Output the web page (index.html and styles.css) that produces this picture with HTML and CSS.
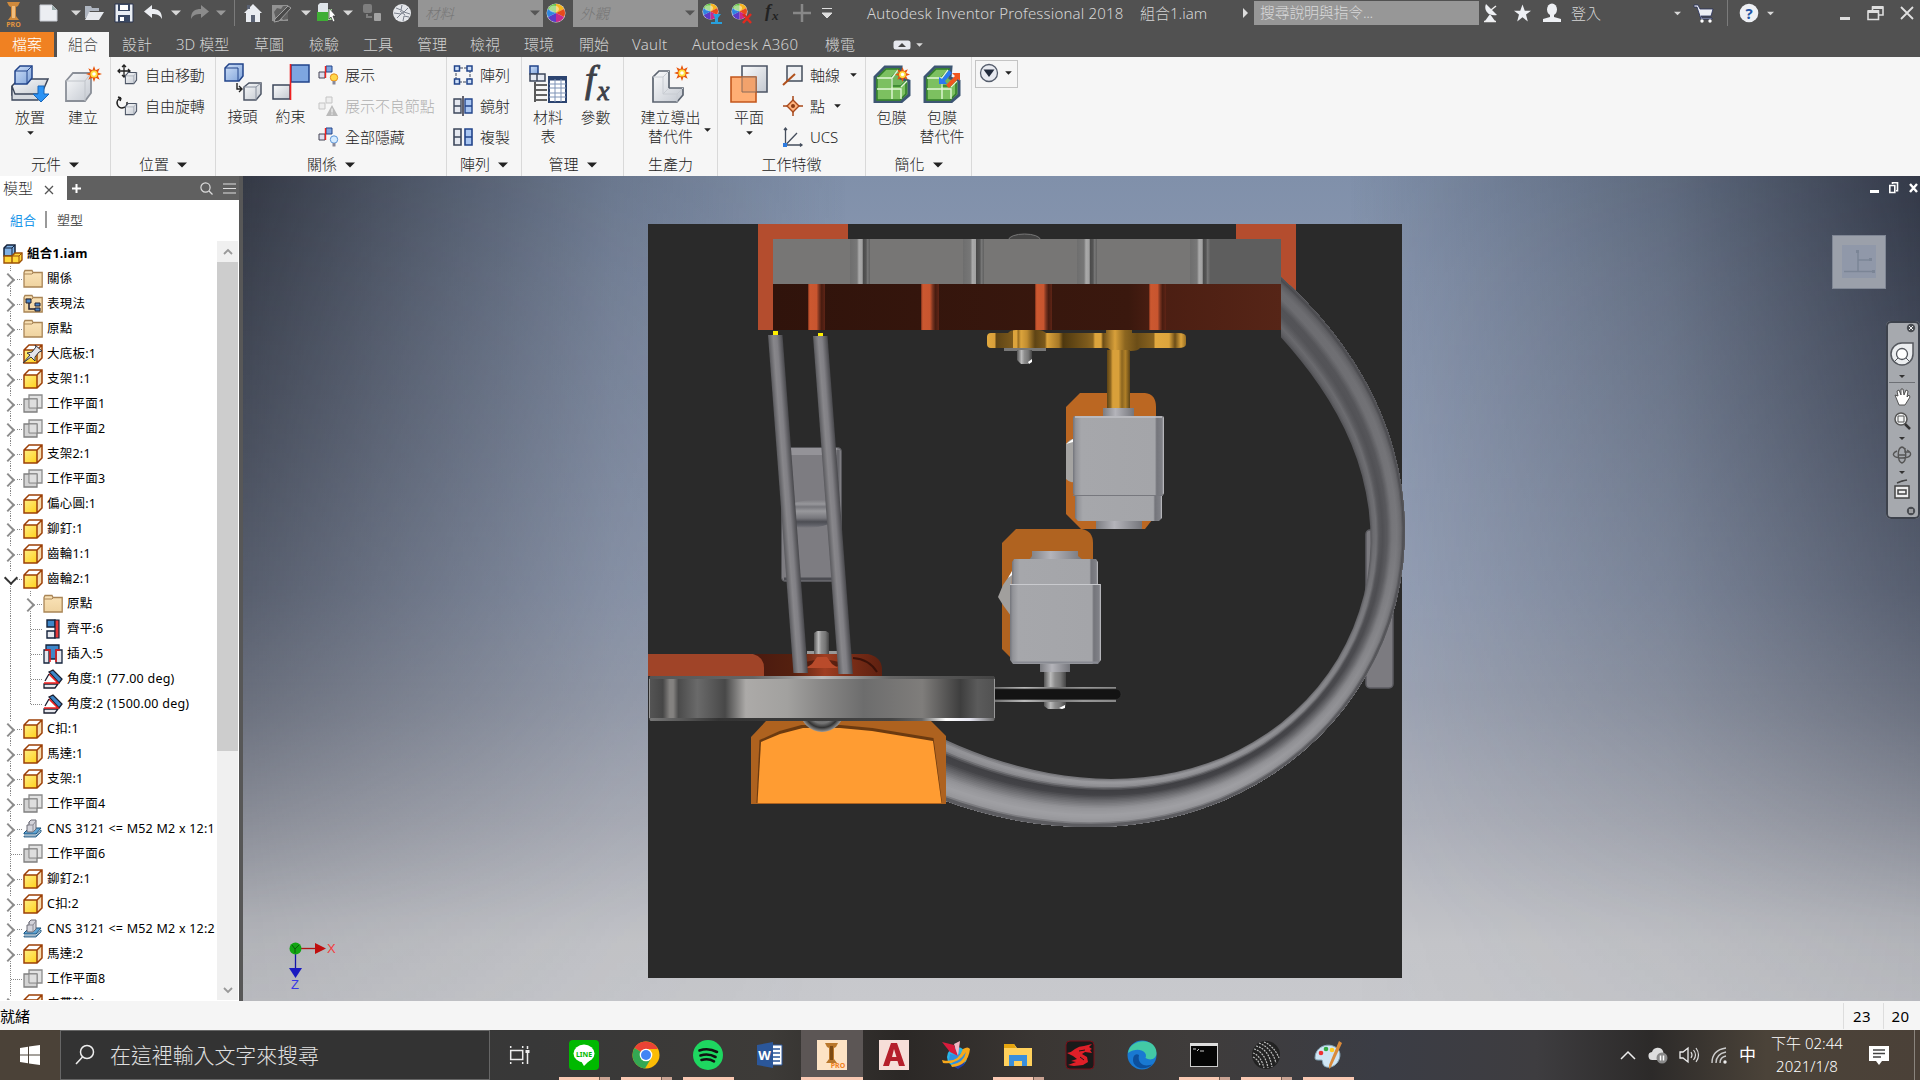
FILE: index.html
```html
<!DOCTYPE html>
<html lang="zh-Hant">
<head>
<meta charset="utf-8">
<title>Autodesk Inventor Professional 2018</title>
<link rel="stylesheet" href="styles.css">
</head>
<body>
<svg class="defs" width="0" height="0">
  <defs>
    <linearGradient id="gBlue" x1="0" y1="0" x2="1" y2="1"><stop offset="0" stop-color="#cfe0f8"/><stop offset="1" stop-color="#7fa3da"/></linearGradient>
    <linearGradient id="gGrey" x1="0" y1="0" x2="1" y2="1"><stop offset="0" stop-color="#fafbfc"/><stop offset="1" stop-color="#c3c8d0"/></linearGradient>
    <linearGradient id="gYel" x1="0" y1="0" x2="1" y2="1"><stop offset="0" stop-color="#ffee85"/><stop offset="1" stop-color="#ffd21c"/></linearGradient>
    <linearGradient id="gFold" x1="0" y1="0" x2="0" y2="1"><stop offset="0" stop-color="#fae3b8"/><stop offset="1" stop-color="#efd3a0"/></linearGradient>
  </defs>
  <symbol id="dn" viewBox="0 0 10 6"><path d="M0 .5h10L5 5.5z" fill="currentColor"/></symbol>
  <symbol id="box" viewBox="0 0 20 20"><path d="M1 6 6 1h13v13l-5 5H1z" fill="#fff3b0"/><path d="M1 6h13v13H1z" fill="url(#gYel)"/><path d="M1 6 6 1h13l-5 5z" fill="#fff"/><path d="M14 6l5-5v13l-5 5z" fill="#f6ddb0"/><path d="M1 6 6 1h13v13l-5 5H1zM1 6h13v13M14 6l5-5" fill="none" stroke="#9c3f06" stroke-width="1.5"/></symbol>
  <symbol id="plane" viewBox="0 0 20 20"><path d="M6 1h13v13H6z" fill="#e2e2e2" stroke="#8b8b8b" stroke-width="1.3"/><path d="M1 5h13v13H1z" fill="#cbcbcb" fill-opacity=".85" stroke="#7f7f7f" stroke-width="1.3"/><path d="M6 5h8v9H6z" fill="#dedede" stroke="#8b8b8b"/></symbol>
  <symbol id="fold" viewBox="0 0 20 20"><path d="M1 3.500 2 1.500h7l1 2h9.200V18H1z" fill="url(#gFold)" stroke="#a98556" stroke-width="1.300"/><path d="M1 5h8l1.500-1.500" fill="none" stroke="#a98556"/></symbol>
  <symbol id="bolt" viewBox="0 0 20 20"><path d="M1 14l5-5h12l-5 6H1z" fill="#5fa3d2" stroke="#16507c"/><path d="M1 17h12l5-6v2l-5 5H1z" fill="#d8e6f0" stroke="#16507c" stroke-width=".8"/><path d="M4 6h2V3l2-2h5v9l-3 3H4z" fill="#d3d3da" stroke="#6b6b75"/><path d="M6 3v3h4l3-4M10 6v7" stroke="#8b8b95" fill="none"/></symbol>
  <symbol id="angle" viewBox="0 0 20 20"><path d="M6 3l4-2 9 9-3 4z" fill="#3e86c8" stroke="#1b1f30" stroke-width="1.300"/><path d="M1 15h14l-3 4H1z" fill="#e6e8ee" stroke="#1b1f30" stroke-width="1.300"/><path d="M6 5l9 9H1z" fill="#fff"/><path d="M6 5l9 9H1" fill="none" stroke="#ef2020" stroke-width="1.500"/><path d="M6 5L2 12" fill="none" stroke="#1b1f30" stroke-width="1.300"/></symbol>
  <symbol id="cube" viewBox="0 0 20 20"><path d="M2 7l4-5h12v11l-4 5H2z" fill="url(#gGrey)" stroke="#4d5666" stroke-width="1.500"/><path d="M2 7h12v11M14 7l4-5" fill="none" stroke="#9aa2ae"/></symbol>
  <symbol id="spark" viewBox="0 0 16 16"><path d="M8 0l1.600 4.200L13.700 2.300 11.800 6.400 16 8l-4.200 1.600 1.900 4.100-4.100-1.900L8 16l-1.600-4.200-4.100 1.900 1.900-4.100L0 8l4.200-1.600L2.300 2.300l4.100 1.900z" fill="#e8560c"/><circle cx="8" cy="8" r="3.600" fill="#ffe040"/><circle cx="8" cy="8" r="1.800" fill="#fff"/></symbol>
  <symbol id="sphere" viewBox="0 0 20 20"><circle cx="10" cy="10" r="9.500" fill="#ddd"/><path d="M10 10V1a9 9 0 0 1 8 5z" fill="#f7b51e"/><path d="M10 10l8-4a9 9 0 0 1 0 8z" fill="#e84b1c"/><path d="M10 10l8 4a9 9 0 0 1-8 5z" fill="#c82a8c"/><path d="M10 10v9a9 9 0 0 1-8-5z" fill="#5b3cc8"/><path d="M10 10l-8 4a9 9 0 0 1 0-8z" fill="#2f86e0"/><path d="M10 10L2 6a9 9 0 0 1 8-5z" fill="#5fc23a"/><ellipse cx="8" cy="6" rx="5" ry="3.500" fill="#fff" opacity=".45"/></symbol>
  <symbol id="green" viewBox="0 0 38 38"><path d="M2 12 12 2h16l-1 11 9 3v14l-8 7H2z" fill="#70b55c" stroke="#3d5673" stroke-width="3"/><path d="M4 13 13 4h13l-7 8v9h9l5-5v13l-6 6H4z" fill="#7cc060" stroke="#2f7d27" stroke-width="1.500"/><path d="M4 13h15v21M4 24h24v10M28 22l6-6M19 13l6-8" fill="none" stroke="#e2f7d8" stroke-width="1.400"/></symbol>
</svg>

<header class="titlebar">
  <svg class="logo" width="15" height="26" viewBox="0 0 15 26"><path d="M1 0h13l-2 4-2 1v9l3 4H2l3-4V5L3 4z" fill="#d08a3c"/><path d="M6 4h3v12H6z" fill="#f0bd7d"/><text x="7.500" y="25" font-size="7" text-anchor="middle" fill="#e09440" font-weight="700">PRO</text></svg>
  <svg width="20" height="20" viewBox="0 0 20 20"><path d="M2 2h12l5 5v11H2z" fill="#eceef2" stroke="#c8ccd4"/><path d="M14 2v5h5z" fill="#9aa"/></svg>
  <svg class="car" width="10" height="6"><use href="#dn"/></svg>
  <svg width="20" height="20" viewBox="0 0 20 20"><path d="M1 3h6l1 2h7v3H6l-4 7H1z" fill="#aeb5c0"/><path d="M5 9h15l-5 8H1z" fill="#e6e9ee"/></svg>
  <svg width="20" height="20" viewBox="0 0 20 20"><path d="M1 1h18v18H1z" fill="#e9edf3" stroke="#2a3550"/><path d="M4 1h12v7H4zM4 12h12v7H4z" fill="#3a4863"/><path d="M6 2h8v5H6zM6 14h4v4H6z" fill="#fff"/></svg>
  <svg width="20" height="18" viewBox="0 0 20 18"><path d="M8 1v4c6 0 10 2 10 10-2-4-5-5-10-5v4L0 7.500z" fill="#eceef2"/></svg>
  <svg class="car" width="10" height="6"><use href="#dn"/></svg>
  <svg width="20" height="18" viewBox="0 0 20 18"><path d="M11 1v4C5 5 1 7 1 15c2-4 5-5 10-5v4l8-6.500z" fill="#8b8b8b"/></svg>
  <svg class="car dim" width="10" height="6"><use href="#dn"/></svg>
  <i class="tsep"></i>
  <svg width="20" height="20" viewBox="0 0 20 20"><path d="M10 1l9 9h-2v9H3v-9H1z" fill="#e9ecf1"/><path d="M8 12h4v7H8zM4 2h3v4H4z" fill="#5a6274"/></svg>
  <svg width="20" height="20" viewBox="0 0 20 20"><path d="M0 2h16v16H0z" fill="#929292"/><path d="M2 9l3-4 4 1 2-3h5v13l-5 1-2-3-5 2z" fill="#606060"/><path d="M3 16L16 3l3 2L7 18l-5 1z" fill="#4a4a4a" stroke="#a0a0a0"/></svg>
  <svg class="car" width="10" height="6"><use href="#dn"/></svg>
  <svg width="20" height="20" viewBox="0 0 20 20"><path d="M1 2l2-2h8v9H1z" fill="#e0e5ea"/><path d="M0 9h11v9H0z" fill="#3fae35"/><path d="M11 6h4v11h-4z" fill="#9fd795"/><path d="M12 5l7 8h-3l2 5-2 1-2-5-2 2z" fill="#fff" stroke="#333" stroke-width=".7"/></svg>
  <svg class="car" width="10" height="6"><use href="#dn"/></svg>
  <svg width="20" height="20" viewBox="0 0 20 20"><rect x="1" y="1" width="9" height="9" rx="2" fill="#7e7e7e"/><path d="M5 11v3h5" fill="none" stroke="#7e7e7e" stroke-width="2"/><rect x="12" y="10" width="7" height="8" rx="1" fill="#a2a2a2"/></svg>
  <svg width="20" height="20" viewBox="0 0 20 20"><circle cx="10" cy="10" r="9" fill="#e4e6ea"/><path d="M4 5l5 2 1-5M16 5l-4 4 6 2M5 15l4-4-7-1M11 18l1-5 5 1M8 8l5 4M9 7l3 2-3 2" stroke="#7a808c" fill="none" stroke-width="1"/></svg>
  <div class="combo"><em>材料</em><svg width="10" height="6"><use href="#dn"/></svg></div>
  <svg width="20" height="20"><use href="#sphere"/></svg>
  <div class="combo"><em>外觀</em><svg width="10" height="6"><use href="#dn"/></svg></div>
  <svg width="21" height="21" viewBox="0 0 21 21"><use href="#sphere" width="17" height="17"/><path d="M11 11h8l-3 4v4h4v2H9v-2h4v-4z" fill="#28a0dc"/></svg>
  <svg width="21" height="21" viewBox="0 0 21 21"><use href="#sphere" width="17" height="17"/><path d="M12 11l8 9M20 11l-8 9" stroke="#e02b20" stroke-width="2.500"/></svg>
  <svg width="20" height="22" viewBox="0 0 20 22"><text x="2" y="15" class="fxs">f<tspan dx="1" dy="3" font-size="13">x</tspan></text></svg>
  <svg width="20" height="20" viewBox="0 0 20 20"><path d="M10 1v18M1 10h18" stroke="#888" stroke-width="2.500"/></svg>
  <svg width="12" height="12" viewBox="0 0 12 12"><path d="M1 1.500h10M1 6h10l-5 5z" stroke="#ddd" fill="#ddd"/></svg>
  <span class="apptitle">Autodesk Inventor Professional 2018</span>
  <span class="fname">組合1.iam</span>
  <svg width="6" height="10" viewBox="0 0 6 10"><path d="M0 0l5 5-5 5z" fill="#ddd"/></svg>
  <div class="find">搜尋說明與指令...</div>
  <svg width="17" height="20" viewBox="0 0 17 20"><path d="M3 1c-3 6 3 13 11 11z" fill="#eef0f4"/><path d="M7 11l5 7H2z" fill="#eef0f4"/><path d="M8 7l5-4M1 18.500h12" stroke="#eee" stroke-width="1.500"/></svg>
  <svg width="19" height="20" viewBox="0 0 20 20"><path d="M10 1l2.400 6.500H19l-5.300 4.200L15.600 19 10 14.600 4.400 19l1.900-7.300L1 7.500h6.600z" fill="#eef0f4"/></svg>
  <svg width="20" height="20" viewBox="0 0 20 20"><ellipse cx="10" cy="6.500" rx="5" ry="6" fill="#eef0f4"/><path d="M8 11h4v3l7 2v3H1v-3l7-2z" fill="#eef0f4"/></svg>
  <span class="login">登入</span>
  <svg class="car tiny" width="10" height="5"><use href="#dn"/></svg>
  <svg width="21" height="20" viewBox="0 0 21 20"><path d="M0 2h4l2 4h13l-2 7H7l1 2h10v1H7L3 4H0z" fill="#eef0f4" stroke="#27305e" stroke-width=".8"/><circle cx="8" cy="18" r="1.700" fill="#fff"/><circle cx="16" cy="18" r="1.700" fill="#fff"/></svg>
  <i class="tsep"></i>
  <svg width="20" height="20" viewBox="0 0 20 20"><circle cx="10" cy="10" r="9.300" fill="#eef0f4"/><text x="10" y="15.500" font-size="15" font-weight="700" text-anchor="middle" fill="#2455a4">?</text></svg>
  <svg class="car tiny" width="10" height="5"><use href="#dn"/></svg>
  <svg class="low" width="14" height="4"><path d="M2 0h10v3H2z" fill="#ddd"/></svg>
  <svg width="17" height="15" viewBox="0 0 17 15"><path d="M5.500 4V1h10.500v8h-4M1 5h10.500v8.500H1z" fill="none" stroke="#ddd" stroke-width="1.600"/><path d="M1 4h11v3H1zM5 0h11v3H5z" fill="#ddd"/></svg>
  <svg width="16" height="14" viewBox="0 0 16 14"><path d="M2 1l12 12M14 1L2 13" stroke="#e0e0e0" stroke-width="1.800"/></svg>
</header>

<nav class="tabs">
  <span class="file">檔案</span><span class="active">組合</span><span>設計</span><span>3D 模型</span><span>草圖</span><span>檢驗</span><span>工具</span><span>管理</span><span>檢視</span><span>環境</span><span>開始</span><span class="vault">Vault</span><span class="a360">Autodesk A360</span><span>機電</span>
  <svg width="18" height="10" viewBox="0 0 18 10"><rect x=".5" y=".5" width="17" height="9" rx="2.500" fill="#e6e8ee"/><path d="M5 7l4-4 4 4z" fill="#444"/></svg>
  <svg class="car" width="7" height="4"><use href="#dn"/></svg>
</nav>

<section class="ribbon">
  <div class="panel p1">
    <div class="body">
      <div class="big b57"><svg width="38" height="38" viewBox="0 0 38 38"><path d="M1 21l7-7h29l-7 16H1z" fill="url(#gGrey)" stroke="#3d475b" stroke-width="1.500"/><path d="M1 35V21l3 8h28l-5 6z" fill="#d6dae0" stroke="#3d475b" stroke-width="1.300"/><path d="M4 6l5-5h12v12l-5 6H4z" fill="url(#gBlue)" stroke="#22448a" stroke-width="1.500"/><path d="M4 6h12v13M16 6l5-5" stroke="#22448a" fill="none"/><path d="M27 21h6v8h5l-8 8-8-8h5z" fill="#2c93f4" stroke="#1b66b8"/></svg><span>放置</span><svg class="ar" width="7" height="4"><use href="#dn"/></svg></div>
      <div class="big b53"><svg width="38" height="38" viewBox="0 0 38 38"><path d="M2 16l7-8h18v20l-6 8H2z" fill="url(#gGrey)" stroke="#8a8f98" stroke-width="1.800"/><path d="M2 16h19v20M21 16l6-8" stroke="#c0c4ca" fill="none"/><use href="#spark" x="22" y="1" width="16" height="16"/></svg><span>建立</span></div>
    </div>
    <div class="cap">元件<svg width="10" height="6"><use href="#dn"/></svg></div>
  </div>
  <div class="panel p2">
    <div class="body"><div class="col">
      <div class="sm"><svg width="20" height="20" viewBox="0 0 20 20"><path d="M6 0v12M0 6h12M4 2l2-2 2 2M4 10l2 2 2-2M2 4L0 6l2 2M10 4l2 2-2 2" stroke="#222" fill="none" stroke-width="1.300"/><use href="#cube" x="6" y="6" width="14" height="14"/></svg>自由移動</div>
      <div class="sm"><svg width="20" height="20" viewBox="0 0 20 20"><path d="M3 2a5 5 0 1 0 6 4M3 2L0 1M3 2L2 5" stroke="#222" fill="none" stroke-width="1.600"/><use href="#cube" x="6" y="6" width="14" height="14"/></svg>自由旋轉</div>
    </div></div>
    <div class="cap">位置<svg width="10" height="6"><use href="#dn"/></svg></div>
  </div>
  <div class="panel p3">
    <div class="body">
      <div class="big b53 up"><svg width="38" height="38" viewBox="0 0 38 38"><path d="M1 5l4-4h14v12l-4 5H1z" fill="url(#gBlue)" stroke="#22448a" stroke-width="1.500"/><path d="M1 5h13v13" stroke="#22448a" fill="none"/><path d="M13 20v6h4M15 23l3 3-3 3" stroke="#222" fill="none" stroke-width="1.400"/><path d="M20 24l5-4h12v11l-5 6H20z" fill="url(#gGrey)" stroke="#4d5666" stroke-width="1.500"/><path d="M20 24h12v13M32 24l5-4" stroke="#8a92a0" fill="none"/></svg><span>接頭</span></div>
      <div class="big b45 up"><svg width="38" height="38" viewBox="0 0 38 38"><path d="M19 2h18v17H19z" fill="#7ea6e0" stroke="#22448a" stroke-width="1.500"/><path d="M1 22h17v14H1z" fill="url(#gGrey)" stroke="#3d475b" stroke-width="1.500"/><path d="M18.500 1v36" stroke="#f02020" stroke-width="1.600"/></svg><span>約束</span></div>
      <div class="col c3">
        <div class="sm"><svg width="20" height="20" viewBox="0 0 20 20"><path d="M8 1h6v6H8z" fill="#7ea6e0" stroke="#22448a"/><path d="M1 7h6v6H1z" fill="#dde" stroke="#445"/><path d="M7.500 1v12" stroke="#f02020" stroke-width="1.400"/><circle cx="16" cy="12.500" r="3.700" fill="#ffd84a" stroke="#e98e1b"/><path d="M14.500 16h3v3.500h-3z" fill="#889"/></svg>展示</div>
        <div class="sm off"><svg width="20" height="20" viewBox="0 0 20 20"><path d="M8 1h6v6H8zM1 7h6v6H1z" fill="#eee" stroke="#c4c4c4"/><path d="M14 9l6 11H8z" fill="#bbb"/><path d="M14 12.500v4M14 17.500v1.200" stroke="#fff"/></svg>展示不良節點</div>
        <div class="sm"><svg width="20" height="20" viewBox="0 0 20 20"><path d="M8 1h6v6H8z" fill="#7ea6e0" stroke="#22448a"/><path d="M1 7h6v6H1z" fill="#dde" stroke="#445"/><path d="M7.500 1v12" stroke="#f02020" stroke-width="1.400"/><circle cx="16" cy="12.500" r="3.700" fill="#d6ecff" stroke="#5a94d8"/><path d="M14.500 16h3v3.500h-3z" fill="#889"/></svg>全部隱藏</div>
      </div>
    </div>
    <div class="cap">關係<svg width="10" height="6"><use href="#dn"/></svg></div>
  </div>
  <div class="panel p4">
    <div class="body"><div class="col c4">
      <div class="sm"><svg width="20" height="20" viewBox="0 0 20 20"><path d="M3 3h14v14H3z" fill="none" stroke="#3d475b" stroke-dasharray="3 1"/><path d="M1.500 1h5v5h-5zM14 1h5v5h-5zM14 14h5v5h-5zM1.500 14h5v5h-5z" fill="#cfe0f8" stroke="#22448a" stroke-width="1.500"/></svg>陣列</div>
      <div class="sm"><svg width="20" height="20" viewBox="0 0 20 20"><path d="M1 3h7v14H1zM1 10h7" fill="#e6e9f0" stroke="#3d475b" stroke-width="1.400"/><path d="M12 3h7v14h-7zM12 10h7" fill="#a9c6f2" stroke="#22448a" stroke-width="1.400"/><path d="M10 0v20" stroke="#223" stroke-width="1.400"/></svg>鏡射</div>
      <div class="sm"><svg width="20" height="20" viewBox="0 0 20 20"><path d="M1 2h7v16H1zM1 10h7" fill="#e6e9f0" stroke="#3d475b" stroke-width="1.600"/><path d="M12 2h7v16h-7zM12 10h7" fill="#a9c6f2" stroke="#22448a" stroke-width="1.600"/></svg>複製</div>
    </div></div>
    <div class="cap">陣列<svg width="10" height="6"><use href="#dn"/></svg></div>
  </div>
  <div class="panel p5">
    <div class="body">
      <div class="big b53"><svg width="38" height="38" viewBox="0 0 38 38"><path d="M1 1h8v8H1z" fill="url(#gBlue)" stroke="#22448a" stroke-width="1.500"/><path d="M1 9h7v7H1zM8 9h8v7H8z" fill="#e6eaf2" stroke="#3d475b" stroke-width="1.500"/><path d="M6 17v20M7 20h11M7 25h11M7 30h11M7 35h11" stroke="#333" stroke-width="1.600"/><path d="M20 12h17v25H20z" fill="#fff" stroke="#2c4470" stroke-width="2"/><path d="M20 14h17" stroke="#2c4470" stroke-width="3"/><path d="M20 19h17M20 23h17M20 28h17M20 32h17M26 14v23M32 14v23" stroke="#7f93b6" stroke-width="1"/></svg><span>材料<br>表</span></div>
      <div class="big b44"><svg width="38" height="38" viewBox="0 0 38 38"><text x="8" y="27" class="fx">f<tspan dx="2" dy="8" font-size="27">x</tspan></text></svg><span>參數</span></div>
    </div>
    <div class="cap">管理<svg width="10" height="6"><use href="#dn"/></svg></div>
  </div>
  <div class="panel p6">
    <div class="body">
      <div class="big b93"><svg width="38" height="38" viewBox="0 0 38 38"><path d="M1 12l6-6h10v17h14v7l-6 7H1z" fill="url(#gGrey)" stroke="#5c6470" stroke-width="1.700"/><path d="M1 12h10v17h14v8M11 12l6-6M11 29l6-6M25 29l6-6" stroke="#c8ccd2" fill="none"/><use href="#spark" x="22" y="0" width="16" height="16"/></svg><span>建立導出<br>替代件</span><svg class="ar side" width="7" height="4"><use href="#dn"/></svg></div>
    </div>
    <div class="cap">生產力</div>
  </div>
  <div class="panel p7">
    <div class="body">
      <div class="big b63"><svg width="38" height="38" viewBox="0 0 38 38"><path d="M12 1h25v26H12z" fill="url(#gGrey)" stroke="#4d5666" stroke-width="1.600"/><path d="M1 12h25v25H1z" fill="#ffae74" stroke="#c4571c" stroke-width="1.600"/><path d="M12 12h14v15H12z" fill="#f2a26c" stroke="#8a6a58"/></svg><span>平面</span><svg class="ar" width="7" height="4"><use href="#dn"/></svg></div>
      <div class="col c7">
        <div class="sm"><svg width="20" height="20" viewBox="0 0 20 20"><path d="M4 1h15v15H4z" fill="#eef0f3" stroke="#444d5c" stroke-width="1.500"/><path d="M0 20L12 9" stroke="#b0501c" stroke-width="2"/></svg>軸線<svg class="a2" width="7" height="4"><use href="#dn"/></svg></div>
        <div class="sm"><svg width="20" height="20" viewBox="0 0 20 20"><path d="M10 4l6 6-6 6-6-6z" fill="#ffb27c" stroke="#a8481a" stroke-width="1.400"/><path d="M10 0v4M10 16v4M0 10h4M16 10h4" stroke="#a8481a" stroke-width="1.500"/><circle cx="10" cy="10" r="2" fill="#8c3c14"/></svg>點<svg class="a3" width="7" height="4"><use href="#dn"/></svg></div>
        <div class="sm"><svg width="20" height="20" viewBox="0 0 20 20"><path d="M2.500 1v17H19M2.500 18L14 6M1 3l1.500-2L4 3M17 16.500l2 1.500-2 1.500" stroke="#444d5c" fill="none" stroke-width="1.300"/><rect x="0" y="16" width="4" height="4" fill="#2c7be0"/></svg>UCS</div>
      </div>
    </div>
    <div class="cap">工作特徵</div>
  </div>
  <div class="panel p8">
    <div class="body">
      <div class="big b52"><svg width="38" height="38" viewBox="0 0 38 38"><use href="#green"/><use href="#spark" x="22" y="2" width="15" height="15"/></svg><span>包膜</span></div>
      <div class="big b50"><svg width="38" height="38" viewBox="0 0 38 38"><use href="#green"/><path d="M16 19v-7l3 2 7-9 3 3-7 8 2 3z" fill="#2a78f0"/><path d="M23 20l9-9-3-3h8v8l-2-2-9 9z" fill="#f2561e"/></svg><span>包膜<br>替代件</span></div>
    </div>
    <div class="cap">簡化<svg width="10" height="6"><use href="#dn"/></svg></div>
  </div>
  <div class="pick"><svg width="20" height="20" viewBox="0 0 20 20"><circle cx="10" cy="10" r="8.500" fill="#e8eaf0" stroke="#555d6c" stroke-width="1.300"/><path d="M4.500 6.500h11L10 14z" fill="#222b3c"/></svg><svg width="7" height="4"><use href="#dn"/></svg></div>
</section>

<main class="main">
  <aside class="browser">
    <div class="bhead"><div class="btab">模型<svg width="10" height="10" viewBox="0 0 10 10"><path d="M1 1l8 8M9 1L1 9" stroke="#555" stroke-width="1.300"/></svg></div>
      <svg class="plus" width="9" height="9" viewBox="0 0 9 9"><path d="M4.500 0v9M0 4.500h9" stroke="#fff" stroke-width="2"/></svg>
      <svg class="mag" width="13" height="13" viewBox="0 0 13 13"><circle cx="5.500" cy="5.500" r="4.600" fill="none" stroke="#ddd" stroke-width="1.200"/><path d="M9 9l3.500 3.500" stroke="#ddd" stroke-width="1.300"/></svg>
      <svg width="13" height="11" viewBox="0 0 13 11"><path d="M0 1h13M0 5.500h13M0 10h13" stroke="#ddd" stroke-width="1.200"/></svg></div>
    <div class="bsub"><span class="on">組合</span><i></i><span>塑型</span></div>
    <div class="bbody">
      <ul class="tree">
        <li class="root"><svg width="20" height="20" viewBox="0 0 20 20"><path d="M1 4l3-3h8v8l-2 3H1z" fill="#7fb0e4" stroke="#14233c" stroke-width="1.500"/><path d="M1 4h8v7M9 4l3-3" fill="none" stroke="#14233c"/><path d="M1 12h8v7H1zM9 12l3-3h7v7l-3 3H9z" fill="#ffd83a" stroke="#9c5006" stroke-width="1.400"/><path d="M9 12h7v7M16 12l3-3" fill="none" stroke="#9c5006"/></svg><b>組合1.iam</b></li>
        <li class="x"><svg><use href="#fold"/></svg>關係</li>
        <li class="x"><svg viewBox="0 0 20 20"><use href="#fold"/><path d="M3 5h5v4H3zM12 9h5v3h-5zM12 14h5v3h-5z" fill="#4a86c8" stroke="#223"/><path d="M6 9v6h6" fill="none" stroke="#223" stroke-width="1.500"/></svg>表現法</li>
        <li class="x"><svg><use href="#fold"/></svg>原點</li>
        <li class="x"><svg viewBox="0 0 20 20"><use href="#box"/><path d="M0 19l7-8-3-2 5-1 4-5-1-2 7 6-3 1-4 5v4l-4-4z" fill="#e4e4ea" stroke="#33333c"/></svg>大底板:1</li>
        <li class="x"><svg><use href="#box"/></svg>支架1:1</li>
        <li class="x"><svg><use href="#plane"/></svg>工作平面1</li>
        <li class="x"><svg><use href="#plane"/></svg>工作平面2</li>
        <li class="x"><svg><use href="#box"/></svg>支架2:1</li>
        <li class="x"><svg><use href="#plane"/></svg>工作平面3</li>
        <li class="x"><svg><use href="#box"/></svg>偏心圓:1</li>
        <li class="x"><svg><use href="#box"/></svg>鉚釘:1</li>
        <li class="x"><svg><use href="#box"/></svg>齒輪1:1</li>
        <li class="x open"><svg><use href="#box"/></svg>齒輪2:1</li>
        <li class="kid x"><svg><use href="#fold"/></svg>原點</li>
        <li class="kid"><svg viewBox="0 0 20 20"><path d="M4 1h8v7H4z" fill="#3e86c8" stroke="#14233c" stroke-width="1.400"/><path d="M4 12h8v7H4z" fill="#e6e8ee" stroke="#14233c" stroke-width="1.400"/><path d="M12 1h4v18h-4z" fill="#e8393a" stroke="#14233c" stroke-width="1.200"/></svg>齊平:6</li>
        <li class="kid"><svg viewBox="0 0 20 20"><path d="M1 6h5v13H1zM13 6h6v13h-6z" fill="#e6e8ee" stroke="#14233c" stroke-width="1.300"/><path d="M3 1h13v5h-3v9H7V6H3z" fill="#3e86c8" stroke="#14233c" stroke-width="1.300"/><path d="M2 6h5v12M17 6h-4v12" fill="none" stroke="#ef2020" stroke-width="1.500"/></svg>插入:5</li>
        <li class="kid"><svg><use href="#angle"/></svg>角度:1 (77.00 deg)</li>
        <li class="kid last"><svg><use href="#angle"/></svg>角度:2 (1500.00 deg)</li>
        <li class="x"><svg><use href="#box"/></svg>C扣:1</li>
        <li class="x"><svg><use href="#box"/></svg>馬達:1</li>
        <li class="x"><svg><use href="#box"/></svg>支架:1</li>
        <li class="x"><svg><use href="#plane"/></svg>工作平面4</li>
        <li class="x"><svg><use href="#bolt"/></svg>CNS 3121 &lt;= M52 M2 x 12:1</li>
        <li><svg><use href="#plane"/></svg>工作平面6</li>
        <li class="x"><svg><use href="#box"/></svg>鉚釘2:1</li>
        <li class="x"><svg><use href="#box"/></svg>C扣:2</li>
        <li class="x"><svg><use href="#bolt"/></svg>CNS 3121 &lt;= M52 M2 x 12:2</li>
        <li class="x"><svg><use href="#box"/></svg>馬達:2</li>
        <li><svg><use href="#plane"/></svg>工作平面8</li>
        <li class="x"><svg><use href="#box"/></svg>皮帶輪:1</li>
      </ul>
      <div class="scroll"><svg width="10" height="6" viewBox="0 0 10 6"><path d="M1 5l4-4 4 4" fill="none" stroke="#999" stroke-width="1.800"/></svg><i></i><svg width="10" height="6" viewBox="0 0 10 6"><path d="M1 1l4 4 4-4" fill="none" stroke="#999" stroke-width="1.800"/></svg></div>
    </div>
  </aside>
  <section class="view">
    <svg class="scene" width="1677" height="825" viewBox="243 176 1677 825">
      <defs>
        <linearGradient id="ridge"><stop offset="0" stop-color="#6e6e6e"/><stop offset=".35" stop-color="#777"/><stop offset=".45" stop-color="#aaa"/><stop offset=".62" stop-color="#a0a0a0"/><stop offset=".64" stop-color="#4a4a4a"/><stop offset=".8" stop-color="#555"/><stop offset=".88" stop-color="#777"/><stop offset="1" stop-color="#606060"/></linearGradient>
        <linearGradient id="post"><stop offset="0" stop-color="#7a2f1a"/><stop offset=".1" stop-color="#cc5830"/><stop offset=".5" stop-color="#c8552f"/><stop offset=".65" stop-color="#7a3420"/><stop offset=".8" stop-color="#481c10"/><stop offset="1" stop-color="#5e2416"/></linearGradient>
        <linearGradient id="redbar"><stop offset="0" stop-color="#30130b"/><stop offset=".7" stop-color="#3a180e"/><stop offset=".75" stop-color="#4b1e12"/><stop offset="1" stop-color="#562517"/></linearGradient>
        <linearGradient id="disc"><stop offset="0" stop-color="#555"/><stop offset=".04" stop-color="#464646"/><stop offset=".06" stop-color="#848280"/><stop offset=".07" stop-color="#848280"/><stop offset=".085" stop-color="#4b4b4b"/><stop offset=".14" stop-color="#6a6a6a"/><stop offset=".22" stop-color="#484848"/><stop offset=".28" stop-color="#acaaa8"/><stop offset=".4" stop-color="#a2a19f"/><stop offset=".5" stop-color="#888786"/><stop offset=".62" stop-color="#6d6d6d"/><stop offset=".79" stop-color="#7f7d7b"/><stop offset=".9" stop-color="#3e3e3e"/><stop offset=".95" stop-color="#5b5b5b"/><stop offset="1" stop-color="#515151"/></linearGradient>
        <linearGradient id="rim"><stop offset="0" stop-color="#555"/><stop offset=".3" stop-color="#666"/><stop offset=".5" stop-color="#bbb"/><stop offset=".7" stop-color="#666"/><stop offset="1" stop-color="#444"/></linearGradient>
        <linearGradient id="rim2"><stop offset="0" stop-color="#777"/><stop offset=".2" stop-color="#333"/><stop offset=".7" stop-color="#444"/><stop offset=".79" stop-color="#666"/><stop offset=".86" stop-color="#fff"/><stop offset=".93" stop-color="#e6e6f2"/><stop offset="1" stop-color="#666"/></linearGradient>
        <linearGradient id="gold"><stop offset="0" stop-color="#5e4415"/><stop offset=".15" stop-color="#8c6620"/><stop offset=".25" stop-color="#d8a03a"/><stop offset=".5" stop-color="#d8a03a"/><stop offset=".65" stop-color="#8c6620"/><stop offset=".8" stop-color="#b08028"/><stop offset="1" stop-color="#5e4415"/></linearGradient>
        <linearGradient id="gear" gradientUnits="userSpaceOnUse" x1="987" y1="0" x2="1187" y2="0"><stop offset="0" stop-color="#e2a93f"/><stop offset=".04" stop-color="#d89f3a"/><stop offset=".045" stop-color="#5e4415"/><stop offset=".13" stop-color="#7c5a1c"/><stop offset=".132" stop-color="#dca43c"/><stop offset=".15" stop-color="#dca43c"/><stop offset=".155" stop-color="#93691f"/><stop offset=".17" stop-color="#dca43c"/><stop offset=".2" stop-color="#c08c30"/><stop offset=".24" stop-color="#5e4415"/><stop offset=".29" stop-color="#7c5a1c"/><stop offset=".3" stop-color="#dca43c"/><stop offset=".36" stop-color="#a57726"/><stop offset=".38" stop-color="#4e380f"/><stop offset=".5" stop-color="#7c5a1c"/><stop offset=".53" stop-color="#8c6620"/><stop offset=".54" stop-color="#dca43c"/><stop offset=".57" stop-color="#dca43c"/><stop offset=".58" stop-color="#6b4d17"/><stop offset=".64" stop-color="#d8a03a"/><stop offset=".69" stop-color="#8c6620"/><stop offset=".75" stop-color="#6b4d17"/><stop offset=".835" stop-color="#8a6420"/><stop offset=".84" stop-color="#e2a93f"/><stop offset=".91" stop-color="#dca43c"/><stop offset=".94" stop-color="#6b4d17"/><stop offset=".97" stop-color="#dca43c"/><stop offset="1" stop-color="#8c6620"/></linearGradient>
        <linearGradient id="motor"><stop offset="0" stop-color="#73757c"/><stop offset=".03" stop-color="#929398"/><stop offset=".09" stop-color="#a6a7ab"/><stop offset=".9" stop-color="#a4a5a9"/><stop offset=".92" stop-color="#74757b"/><stop offset=".98" stop-color="#808187"/><stop offset="1" stop-color="#c8c8cc"/></linearGradient>
        <linearGradient id="steel"><stop offset="0" stop-color="#555"/><stop offset=".3" stop-color="#bbb"/><stop offset=".5" stop-color="#8d8d8d"/><stop offset=".75" stop-color="#777"/><stop offset="1" stop-color="#444"/></linearGradient>
        <linearGradient id="collar"><stop offset="0" stop-color="#7c7d82"/><stop offset=".4" stop-color="#b4b4ba"/><stop offset="1" stop-color="#75767c"/></linearGradient>
        <linearGradient id="rod"><stop offset="0" stop-color="#5a5a5e"/><stop offset=".35" stop-color="#88878b"/><stop offset=".6" stop-color="#818085"/><stop offset="1" stop-color="#48484c"/></linearGradient>
        <linearGradient id="hub"><stop offset="0" stop-color="#4b1a0f"/><stop offset=".3" stop-color="#54200f"/><stop offset=".55" stop-color="#a03e22"/><stop offset=".75" stop-color="#7a2d17"/><stop offset="1" stop-color="#5e2010"/></linearGradient>
        <linearGradient id="shelf" x1="0" y1="0" x2="0" y2="1"><stop offset="0" stop-color="#7d7c81"/><stop offset=".15" stop-color="#97979b"/><stop offset=".25" stop-color="#77777c"/><stop offset=".4" stop-color="#98989c"/><stop offset=".65" stop-color="#77777c"/><stop offset=".78" stop-color="#4c4d53"/><stop offset=".9" stop-color="#606168"/><stop offset="1" stop-color="#7d7c81"/></linearGradient>
        <radialGradient id="ball"><stop offset="0" stop-color="#444"/><stop offset=".6" stop-color="#777"/><stop offset=".8" stop-color="#333"/><stop offset="1" stop-color="#999"/></radialGradient>
        <linearGradient id="belt"><stop offset="0" stop-color="#555"/><stop offset=".3" stop-color="#bbb"/><stop offset=".55" stop-color="#777"/><stop offset=".75" stop-color="#999"/><stop offset="1" stop-color="#888"/></linearGradient>
        <clipPath id="nc"><rect x="795" y="721" width="50" height="14"/></clipPath>
        <clipPath id="tc"><path d="M1281 224h130v616H946V400h335z"/></clipPath>
      </defs>
      <rect x="648" y="224" width="754" height="754" fill="#2a2a2a"/>
      <path d="M758 224h90v15h-75v91h-15zM1236 224h60v90h-15v-75h-45z" fill="#b44d2e"/>
      <rect x="1366" y="530" width="27" height="158" rx="4" fill="#7c7b80" stroke="#5c5c61" stroke-width="1.500"/>
      <g id="tube" clip-path="url(#tc)"></g>
      <ellipse cx="1024.500" cy="240" rx="16" ry="6" fill="#444" stroke="#777"/>
      <rect x="773" y="239" width="508" height="45" fill="#777675"/>
      <rect x="1205" y="239" width="76" height="45" fill="#5e5e5e"/>
      <g fill="url(#ridge)"><rect x="850" y="239" width="20" height="45"/><rect x="963" y="239" width="21" height="45"/><rect x="1077" y="239" width="20" height="45"/><rect x="1190" y="239" width="20" height="45"/></g>
      <rect x="773" y="284" width="508" height="46" fill="url(#redbar)"/>
      <g fill="url(#post)"><rect x="808" y="284" width="17" height="46"/><rect x="921" y="284" width="18" height="46"/><rect x="1035" y="284" width="17" height="46"/><rect x="1149" y="284" width="17" height="46"/></g>
      <rect x="781.500" y="447.500" width="60" height="134" rx="4" fill="#7d7c81" stroke="#56565a"/>
      <path d="M785 448h52v7h-52z" fill="#949398"/><path d="M838 450v126" stroke="#66666b" stroke-width="3"/><path d="M784 579h54" stroke="#4c4c52" stroke-width="3"/>
      <path d="M793 503q16-4 36-3v24q-16 6-36 3z" fill="url(#shelf)"/>
      <path d="M755 654h113q14 3 14 16v6H755z" fill="url(#hub)"/><path d="M800 664q22-9 45 0-22 8-45 0z" fill="#2e0d06" opacity=".55"/><path d="M817 657h10l5 7 6 4h-32l6-4z" fill="#b94b2b"/>
      <path d="M853 658q16 1 24 14" stroke="#3c1209" stroke-width="2" fill="none"/>
      <path d="M807 651h31v3h-31z" fill="#999"/><path d="M814 633l3-2h9l3 2v21h-15z" fill="url(#steel)"/>
      <path d="M773 331h5v5h-5zM818 333h5v4h-5z" fill="#ffef00"/>
      <path d="M0 0h14.500v338H0z" fill="url(#rod)" transform="translate(768 335) skewX(4.300)"/>
      <path d="M0 0h14.500v338H0z" fill="url(#rod)" transform="translate(813 336) skewX(4.300)"/>
      <path d="M991 333h17q2-3 8-3h22q5 0 8 3h60v-3h26v3h46q8 0 8 4v7q0 4-8 4h-38q-2 3-9 3h-14q-7 0-9-3H991q-4 0-4-4v-7q0-4 4-4z" fill="url(#gear)"/>
      <path d="M1004 348h42v3h-42z" fill="#777"/><path d="M1017 350h15v10l-4 4h-7l-4-4z" fill="url(#steel)"/><path d="M1028 362l4-3v3l-3 2z" fill="#fff"/>
      <path d="M1066 407l14-14h65q11 1 11 14v108l-11 14h-64l-15-15z" fill="#bb6722"/>
      <rect x="1107" y="350" width="23" height="59" fill="url(#gold)"/>
      <path d="M1073 439q-3 0-7 5v35q4 4 7 3z" fill="#a5a4a2"/><path d="M1066 444l7-5v3z" fill="#fff"/>
      <rect x="1103" y="408" width="31" height="10" fill="url(#collar)"/>
      <path d="M1096 520h46v9h-46z" fill="url(#collar)"/>
      <path d="M1075 494h87v24l-3 3h-81l-3-3z" fill="url(#motor)"/>
      <rect x="1073" y="416" width="91" height="79" rx="2" fill="url(#motor)"/><path d="M1075 417h87" stroke="#c0c1c6" stroke-width="1.500"/><path d="M1073 495.500h90" stroke="#77787e"/>
      <path d="M1002 543l14-14h66q11 2 11 14v110l-83 4-8-8z" fill="#b06320"/>
      <path d="M1032 551h46v5l5 4h-54l3-4z" fill="url(#collar)"/>
      <path d="M1012 572l-9 13-5 12 5 8 8 11z" fill="#a19f9d"/><path d="M1012 571l-4 7 4-3z" fill="#fff"/>
      <path d="M1014 559h82l2 3v24h-86v-24z" fill="url(#motor)"/><path d="M1010 584h91v76l-3 4h-85l-3-4z" fill="url(#motor)"/><path d="M1010 584.500h90" stroke="#c9cace"/><path d="M1013 662.500h85" stroke="#888a92" stroke-width="2"/>
      <rect x="1040" y="664" width="30" height="8" fill="url(#collar)"/><rect x="1044" y="672" width="22" height="15" fill="url(#steel)"/>
      <path d="M1044 700h22v6l-4 3h-14l-4-3z" fill="url(#steel)"/><path d="M1059 708l6-3v3l-3 1z" fill="#fff"/>
      <rect x="985" y="687" width="131" height="15" fill="url(#belt)"/><rect x="980" y="689" width="141" height="10.500" rx="5" fill="#131313" stroke="#333" stroke-width=".7"/>
      <path d="M648 654h105q11 3 11 14v8H648z" fill="#a04428"/>
      <path d="M751 737l15-16h165l15 15v68H751z" fill="#ae621f"/>
      <path d="M756.500 803l3-63 20-9 22-6h39l32 3 61 10 8.500 65z" fill="#6b3a10"/>
      <path d="M757.500 803l3.500-61 19-8 23-6h37l32 3 61 10 8.500 62z" fill="#ff9c32"/>
      <circle cx="822" cy="710" r="22" fill="url(#ball)" clip-path="url(#nc)"/>
      <rect x="649" y="676" width="346" height="45" rx="3" fill="url(#disc)"/><rect x="650" y="676" width="344" height="3" rx="1" fill="url(#rim)"/><rect x="650" y="718" width="344" height="3" rx="1" fill="url(#rim2)"/><path d="M649.500 679v39M994.500 679v39" stroke="#999"/>
      <path d="M295.500 948v20" stroke="#1414a8" stroke-width="1.300"/><path d="M296 948.500h20" stroke="#b01414" stroke-width="1.300"/>
      <circle cx="295.500" cy="948.500" r="6" fill="#12a512"/><path d="M292 945l3 4 4-4M295 949v4" stroke="#0b5d0b" fill="none"/><path d="M315 943l11 5.500-11 5.500z" fill="#c00d0d"/><path d="M289 968h13l-6.500 10z" fill="#1a1ac0"/>
      <text x="327" y="953" class="ax red">X</text><text x="291" y="989" class="ax blue">Z</text>
    </svg>
    <div class="docbtns"><svg width="54" height="12" viewBox="0 0 54 12"><path d="M1 8h9v3H1z" fill="#fff"/><path d="M23.500 2V.8h5v8H27M20.800 3.500h5v7h-5z" fill="none" stroke="#fff" stroke-width="1.600"/><path d="M41 2l7 8M48 2l-7 8" stroke="#fff" stroke-width="2.400"/></svg></div>
    <div class="viewcube"><svg width="52" height="52" viewBox="0 0 52 52"><path d="M9 9h34v33H9z" fill="#9098a9"/><path d="M25 15v21M25 24h12M11 35.500h31" stroke="#7b8596" stroke-width="1.500"/><path d="M23 14h3v3h-3zM36 22h3v3h-3zM39 34h3v3h-3z" fill="#7b8596"/></svg></div>
    <div class="navbar"><svg width="34" height="198" viewBox="0 0 34 198">
      <circle cx="26" cy="7" r="4.200" fill="#4a4d52"/><path d="M24 5l4 4M28 5l-4 4" stroke="#eee"/>
      <path d="M17 22h11v11a11 11 0 1 1-11-11z" fill="#eceef0" stroke="#55585e" stroke-width="1.500"/><circle cx="17" cy="33" r="5.500" fill="#fff" stroke="#55585e" stroke-width="1.300"/><path d="M9 41l4-4M21 37l4 4" stroke="#55585e"/>
      <path d="M14 54h6l-3 3z" fill="#333"/><path d="M4 61.500h26" stroke="#6d7075"/>
      <path d="M10 74l3 1-1-5 2-1 2 5V68h2l1 6 2-5 2 1-1 6 2-2 1 2-5 8h-6z" fill="#fff" stroke="#444" stroke-width=".9"/>
      <circle cx="16" cy="98" r="6" fill="#f4f6f6" stroke="#555" stroke-width="1.500"/><path d="M13 95h6v6h-6z" fill="none" stroke="#555"/><path d="M20 103l5 5" stroke="#333" stroke-width="2.500"/><path d="M14 116h6l-3 3z" fill="#333"/>
      <path d="M17 142c-5-2-5-15 0-16 5 1 5 14 0 16zM22 129c7 4 3 8-5 8s-12-4-5-7M14 134h6M20 127v4h4" fill="none" stroke="#555" stroke-width="1.400"/><path d="M14 150h6l-3 3z" fill="#333"/>
      <path d="M10 165h14v12H10zM13 169h8v4h-8z" fill="#eee" stroke="#444" stroke-width="1.500"/><path d="M12 162l5-2 5-1" stroke="#444" stroke-width="1.500"/>
      <circle cx="26" cy="190" r="4.200" fill="#4a4d52"/><path d="M24 189h4M24 191h4" stroke="#eee"/></svg></div>
  </section>
</main>

<footer class="status"><span>就緒</span><span class="n n1">23</span><span class="n">20</span></footer>

<div class="taskbar">
  <div class="start"><svg width="20" height="20" viewBox="0 0 20 20"><path d="M0 3l8-1.200V9.500H0zM9 1.600L20 0v9.500H9zM0 10.500h8v7.700L0 17zM9 10.500h11V20L9 18.400z" fill="#fff"/></svg></div>
  <div class="search"><svg width="22" height="22" viewBox="0 0 22 22"><circle cx="13" cy="8" r="6.500" fill="none" stroke="#eee" stroke-width="1.500"/><path d="M8.500 13L2 20" stroke="#eee" stroke-width="1.500"/></svg>在這裡輸入文字來搜尋</div>
  <div class="apps">
    <div><svg width="22" height="20" viewBox="0 0 22 20"><path d="M1.700 5.500h12v9h-12zM1.700 3V1M13.700 1v2M1.700 17v2M13.700 17v2M18.500 1v3M18.500 8v11" fill="none" stroke="#eee" stroke-width="1.500"/><path d="M16.500 5h4v3h-4z" fill="#eee"/></svg></div>
    <div class="run two"><svg width="30" height="30" viewBox="0 0 30 30"><rect width="30" height="30" rx="4" fill="#00b900"/><ellipse cx="15" cy="13.500" rx="10.500" ry="9" fill="#fff"/><path d="M12 21l3 5 6-6z" fill="#fff"/><text x="15" y="16.500" font-size="7" font-weight="700" text-anchor="middle" fill="#00b900">LINE</text></svg></div>
    <div class="run two"><svg width="28" height="28" viewBox="0 0 28 28"><circle cx="14" cy="14" r="13.500" fill="#fbbc05"/><path d="M14 14L2.500 7A13.500 13.500 0 0 1 26 8H14z" fill="#ea4335"/><path d="M14 14L2.500 7A13.500 13.500 0 0 0 13 27.500l6-10z" fill="#34a853"/><circle cx="14" cy="14" r="6.300" fill="#fff"/><circle cx="14" cy="14" r="5" fill="#4285f4"/></svg></div>
    <div class="run"><svg width="30" height="30" viewBox="0 0 30 30"><circle cx="15" cy="15" r="15" fill="#1ed760"/><path d="M6.500 10.500q9-3 17.500 1.500M7.500 15.500q8-2.500 15 1.500M8.500 20q7-2 12.500 1.300" fill="none" stroke="#111" stroke-width="2.600" stroke-linecap="round"/></svg></div>
    <div><svg width="28" height="28" viewBox="0 0 28 28"><path d="M13 4h13v20H13z" fill="#fff" stroke="#2b579a"/><path d="M16 8h8M16 12h8M16 16h8M16 20h8" stroke="#2b579a" stroke-width="1.500"/><path d="M1 4l16-3v26L1 24z" fill="#2b579a"/><text x="8.500" y="19" font-size="13" font-weight="700" text-anchor="middle" fill="#fff">W</text></svg></div>
    <div class="run cur"><svg width="30" height="30" viewBox="0 0 30 30"><rect width="30" height="30" fill="#fde3c4"/><path d="M8 3h13l-2 4-2 1v11l3 4H9l3-4V8l-2-1z" fill="#b9772b"/><path d="M13 6h3v14h-3z" fill="#7c4a13"/><text x="21" y="28" font-size="7" font-weight="700" text-anchor="middle" fill="#f08020">PRO</text></svg></div>
    <div><svg width="30" height="30" viewBox="0 0 30 30"><rect width="30" height="30" fill="#f6ded8"/><path d="M4 26L12 3h6l8 23h-6l-1.500-5h-7L10 26zM13 17h4.500L15 9z" fill="#b51f2b"/></svg></div>
    <div><svg width="30" height="30" viewBox="0 0 30 30"><circle cx="16" cy="17" r="10" fill="#29b6e8"/><path d="M9 14q8 2 16-3 3 8-4 14-8 3-13-5z" fill="#2f8fe0"/><path d="M12 26q9-2 13-9l-2 8-6 4z" fill="#1c3fae"/><path d="M1 2l12 3 4 11-8-4z" fill="#d81b3c"/><path d="M13 4l6-3-2 15z" fill="#f3b6c4"/><path d="M1 20q16 4 21-11 5-3 7 0-2 17-18 18l-1-2q13-2 15-13-8 13-23 11z" fill="#f7a81b"/></svg></div>
    <div class="run two"><svg width="30" height="26" viewBox="0 0 30 26"><path d="M1 2h10l3 4h15v18H1z" fill="#ffd15c"/><path d="M1 2h10l2 4H1z" fill="#e5a50f"/><path d="M6 24V13h18v11h-5v-5h-8v5z" fill="#3a8fdc"/></svg></div>
    <div><svg width="30" height="30" viewBox="0 0 30 30"><rect x="1" y="1" width="28" height="28" rx="4" fill="#1a1a1a" stroke="#7a0f18"/><path d="M2 13q5-1 8-4 4-3 9-3l8-2-3 3 3 2-2 1 2 3-7-1-3 2 5 3 1 5-5 3-9 1-6-1 8-3-5-1 6-2-4-3z" fill="#e01f28"/><path d="M14 11l6-1M15 17l4 3" stroke="#1a1a1a"/></svg></div>
    <div><svg width="30" height="30" viewBox="0 0 30 30"><circle cx="15" cy="15" r="14.500" fill="#1979d2"/><path d="M1 13C3-2 29-3 29.500 13c0 6-6 8-11 5 3-7-8-12-17.500-5z" fill="#43c9a5"/><path d="M12 15c-2 8 5 13 14 9-8 8-20 4-20-4 0-5 3-7 6-5z" fill="#0c4f9c"/></svg></div>
    <div class="run two"><svg width="28" height="24" viewBox="0 0 28 24"><rect x=".5" y=".5" width="27" height="23" fill="#050505" stroke="#ccc"/><path d="M0 0h28v3H0z" fill="#ddd"/><path d="M3 6h3M7 8l2-2M10 8h4" stroke="#ccc"/></svg></div>
    <div class="run two"><svg width="30" height="30" viewBox="0 0 30 30"><circle cx="15" cy="15" r="14" fill="#222"/><path d="M3 9Q14 12 17 28M5 6q13 3 16 21M8 3q13 5 17 20M13 2q10 4 15 16M2 13q8 3 11 15M2 17q6 3 7 9" fill="none" stroke="#bbb" stroke-width="1.200" stroke-dasharray="2 1"/></svg></div>
    <div class="run"><svg width="30" height="30" viewBox="0 0 30 30"><path d="M2 18C2 8 12 3 20 6c9 3 8 12 4 17-5 6-13 5-14 1s0-4-3-4-5 0-5-2z" fill="#cfe5f4" stroke="#8ab"/><circle cx="8" cy="13" r="2.300" fill="#e33"/><circle cx="13" cy="9" r="2.300" fill="#3a4"/><circle cx="19" cy="10" r="2.300" fill="#fc2"/><path d="M26 1l3 2-11 24-2 2v-4z" fill="#d98a3a"/></svg></div>
  </div>
  <div class="tray">
    <svg width="18" height="10" viewBox="0 0 18 10"><path d="M2 9l7-7 7 7" fill="none" stroke="#eee" stroke-width="1.500"/></svg>
    <svg width="20" height="18" viewBox="0 0 20 18"><path d="M5 14a4 4 0 0 1-1-8 6 6 0 0 1 11-1l2 9z" fill="#ddd"/><circle cx="14" cy="12" r="5.500" fill="#8a8a8a"/><path d="M12.500 9.500v5M15.500 9.500v5" stroke="#fff" stroke-width="1.500"/></svg>
    <svg width="20" height="18" viewBox="0 0 20 18"><path d="M1 6h3l5-4v14l-5-4H1z" fill="none" stroke="#eee" stroke-width="1.300"/><path d="M12 6q2 3 0 6M14.500 4q4 5 0 10M17 2q5 7 0 14" fill="none" stroke="#ddd" stroke-width="1.200"/></svg>
    <svg width="18" height="18" viewBox="0 0 18 18"><path d="M2 17Q2 4 16 2M6 17Q6 8 16 6M10 17q0-6 6-7" fill="none" stroke="#ccc" stroke-width="1.400"/><circle cx="15" cy="16" r="1.700" fill="#eee"/></svg>
    <span>中</span>
  </div>
  <div class="clock"><span>下午 02:44</span><span>2021/1/8</span></div>
  <div class="note"><svg width="21" height="21" viewBox="0 0 21 21"><path d="M0 1h20v15h-7l-3 4-3-4H0z" fill="#fff"/><path d="M4 5h12M4 8.500h12M4 12h8" stroke="#444" stroke-width="1.300"/></svg></div>
  <i class="peek"></i>
</div>
<script src="tube.js"></script>
</body>
</html>
```
FILE: styles.css
```css
* { box-sizing: border-box; }
body { margin: 0; width: 1920px; height: 1080px; overflow: hidden; display: flex; flex-direction: column; font: 15px/20px "Noto Sans", "Noto Sans CJK TC", sans-serif; color: #222; background: #f5f5f5; }
.defs { position: absolute; }
svg { display: block; flex: none; overflow: visible; }

.titlebar { height: 32px; padding: 0 0 6px 6px; background: #515151; color: #d6d6d6; display: grid; align-items: center; white-space: nowrap; font-weight: 300; grid-template-rows: 26px;
  grid-template-columns: 32px 33px 13px 30px 30px 27px 19px 26px 18px 9px 29px 29px 16px 26px 19px 30px 26px 128px 27px 129px 29px 32px 29px 29px 46px 273px 103px 11px 229px 30px 29px 29px 103px 20px 33px 12px 28px 71px 29px 32px 21px; }
.logo { margin-top: 4px; }
.car { color: #d8d8d8; }
.dim { color: #999; }
.tiny { width: 7px; }
.low { margin-top: 12px; }
.tsep { width: 1px; height: 26px; background: #7b7b7b; }
.combo { width: 125px; height: 27px; background: #959595; display: flex; align-items: center; justify-content: space-between; padding: 0 3px 0 7px; color: #555; }
.combo em { color: #777; font-size: 14.5px; margin-top: -1px; }
.apptitle { letter-spacing: .17px; }
.find { width: 225px; height: 24px; padding-left: 6px; line-height: 22px; letter-spacing: -.3px; background: #979797; color: #d9d9d9; }
.fxs { font: italic 700 18px "Liberation Serif", serif; fill: #222; }

.tabs { height: 25px; background: #515151; color: #d2d2d2; display: grid; align-items: center; white-space: nowrap; font-weight: 300; line-height: 24px; grid-template-rows: 25px;
  grid-template-columns: 57px 65px 54px 78px 55px 54px 54px 53px 54px 55px 53px 60px 133px 68px 23px 20px; }
.tabs > span { height: 25px; }
.file { width: 54px; text-align: center; background: #f08122; color: #fff; }
.active { width: 52px; text-align: center; background: #f6f6f6; color: #444; }
.vault { letter-spacing: .3px; }
.a360 { letter-spacing: .3px; }

.ribbon { height: 119px; background: #f6f6f6; display: flex; font-weight: 300; }
.panel { border-right: 1px solid #d9d9d9; display: flex; flex-direction: column; flex: none; }
.p1 { width: 111px; } .p2 { width: 105px; } .p3 { width: 231px; } .p4 { width: 75px; } .p5 { width: 102px; } .p6 { width: 94px; } .p7 { width: 148px; } .p8 { width: 106px; }
.body { height: 95px; display: flex; }
.cap { height: 23px; display: flex; justify-content: center; align-items: center; gap: 8px; }
.cap svg { margin-top: 3px; }
.big { display: flex; flex-direction: column; align-items: center; text-align: center; padding-top: 8px; line-height: 19px; position: relative; }
.big > span { margin-top: 5px; white-space: nowrap; }
.up { padding-top: 6px; }
.up > span { margin-top: 6px; }
.ar { margin-top: 4px; }
.side { position: absolute; right: 6px; top: 67px; }
.b57 { width: 60px; } .b53 { width: 53px; } .b45 { width: 43px; } .b44 { width: 43px; } .b93 { width: 93px; } .b63 { width: 62px; } .b52 { width: 51px; } .b50 { width: 50px; }
.p1 .b53 { width: 46px; }
.p5 .b53 { width: 52px; }
.col { display: flex; flex-direction: column; padding: 2px 0 0 7px; }
.c3 { padding-left: 6px; } .c4 { padding-left: 6px; } .c7 { padding-left: 3px; }
.sm { height: 31px; display: flex; align-items: center; gap: 7px; white-space: nowrap; letter-spacing: -.05px; }
.off { color: #b0b0b0; }
.a2 { margin-left: 3px; } .a3 { margin-left: 2px; }
.pick { width: 43px; height: 28px; margin: 3px 0 0 3px; border: 1px solid #c4c4c4; display: flex; align-items: center; justify-content: space-between; padding: 0 5px 2px 3px; }
.fx { font: italic 400 38px "Liberation Serif", serif; fill: #3c4048; stroke: #3c4048; stroke-width: .9px; }

.main { height: 825px; display: flex; flex: none; }
.browser { width: 243px; background: #fff; border-right: 4px solid #575757; display: flex; flex-direction: column; flex: none; }
.bhead { height: 24px; background: #606060; display: flex; align-items: center; padding-right: 3px; }
.btab { width: 67px; height: 24px; background: #fff; padding-left: 3px; display: flex; align-items: center; gap: 11px; color: #333; font-weight: 300; line-height: 22px; }
.btab svg { margin-top: 3px; }
.plus { margin-left: 5px; }
.mag { margin-left: auto; margin-right: 10px; }
.bsub { height: 41px; display: flex; align-items: center; padding: 0 0 2px 10px; font-size: 13px; color: #555; }
.bsub i { width: 2px; height: 17px; background: #999; margin: 0 10px 0 9px; }
.bsub .on { color: #1c97ea; }
.bbody { height: 760px; display: flex; }
.tree { list-style: none; margin: 0; padding: 0; width: 217px; height: 759px; overflow: hidden; color: #000; font: 12.5px/25px "Noto Sans", "Noto Sans CJK TC", sans-serif; letter-spacing: .23px; }
.tree li { height: 25px; display: flex; align-items: center; gap: 4px; padding-left: 23px; white-space: nowrap; position: relative;
  background: repeating-linear-gradient(#888 0 1px, transparent 1px 2px) 10px 0/1px 100% no-repeat, repeating-linear-gradient(90deg, #888 0 1px, transparent 1px 2px) 11px 13px/11px 1px no-repeat; }
.tree li svg { width: 20px; height: 20px; }
.tree .root { padding-left: 3px; gap: 4px; background: none; }
.tree .x::before { content: ""; position: absolute; left: 6px; top: 5px; width: 11px; height: 15px; background: #fff; }
.tree .x::after { content: ""; position: absolute; left: 3px; top: 9px; width: 8px; height: 8px; border: solid #8c8c8c; border-width: 2.2px 2.2px 0 0; transform: rotate(45deg); }
.tree .open::after { border-color: #333; transform: rotate(135deg); left: 6px; top: 7px; }
.tree .kid { padding-left: 43px; background: repeating-linear-gradient(#888 0 1px, transparent 1px 2px) 10px 0/1px 100% no-repeat, repeating-linear-gradient(#888 0 1px, transparent 1px 2px) 30px 0/1px 100% no-repeat, repeating-linear-gradient(90deg, #888 0 1px, transparent 1px 2px) 31px 13px/11px 1px no-repeat; }
.tree .last { background-size: 1px 100%, 1px 13px, 11px 1px; }
.tree .kid.x::before { left: 26px; } .tree .kid.x::after { left: 23px; }
.scroll { width: 21px; height: 759px; background: #f0f0f0; display: flex; flex-direction: column; align-items: center; }
.scroll svg { margin: 8px 0 7px; }
.scroll i { width: 21px; height: 489px; background: #cdcdcd; margin-bottom: auto; }

.view { width: 1677px; position: relative; background: linear-gradient(#8090aa 0, #8896af 12%, #97a2b8 50%, #9fa6b6 63%, #b0b3bd 78%, #c6c7cb 93%, #c8c9cd 100%); }
.view::before { content: ""; position: absolute; inset: 0; background: linear-gradient(90deg, #30343f 0, rgba(48,52,63,.72) 8%, rgba(48,54,66,.28) 22%, rgba(48,54,66,0) 36%, rgba(48,54,66,0) 66%, rgba(48,54,66,.45) 85%, #2f3442 100%); -webkit-mask: linear-gradient(rgba(0,0,0,.95) 0, rgba(0,0,0,.62) 50%, rgba(0,0,0,.45) 66%, rgba(0,0,0,.15) 90%, rgba(0,0,0,.1)); mask: linear-gradient(rgba(0,0,0,.95) 0, rgba(0,0,0,.62) 50%, rgba(0,0,0,.45) 66%, rgba(0,0,0,.15) 90%, rgba(0,0,0,.1)); }
.scene { position: relative; }
.ax { font: 13px "Liberation Sans", sans-serif; }
.red { fill: #f23c3c; } .blue { fill: #3737e6; }
.docbtns { position: absolute; right: -3px; top: 6px; }
.viewcube { position: absolute; left: 1589px; top: 59px; width: 54px; height: 54px; background: #9ba0aa; border: 1px solid #7f8694; }
.navbar { position: absolute; right: 0; top: 145px; width: 34px; height: 198px; border-radius: 5px; background: #a6a9ae; box-shadow: inset 0 0 0 2px #3d424c; }
.navbar svg { margin-left: -1px; }

.status { height: 29px; flex: none; background: #f5f5f5; color: #000; display: flex; align-items: center; }
.n { width: 37px; height: 26px; line-height: 26px; padding-right: 3px; text-align: center; border-left: 1px solid #ddd; letter-spacing: .4px; }
.n1 { width: 40px; margin-left: auto; }

.taskbar { height: 50px; flex: none; display: flex; background: linear-gradient(90deg, #4b4238 0, #3a3836 4%, #383838 28%, #3d3b38 40%, #2b2826 47%, #3a3633 54%, #3f3c3b 62%, #3b3d45 72%, #3e3d40 80%, #2c2a29 86%, #4b4339 92%, #4b4138 100%); color: #fff; }
.start { width: 60px; display: flex; align-items: center; justify-content: center; background: #4b4238; }
.search { width: 430px; border: 1px solid #666; background: #333; display: flex; align-items: center; padding-left: 13px; gap: 14px; font-size: 20.9px; color: #e0e0e0; font-weight: 300; }
.apps { display: flex; }
.apps > div { width: 62px; display: flex; align-items: center; justify-content: center; position: relative; }
.apps > div:first-child { width: 63px; padding-right: 3px; }
.run::after { content: ""; position: absolute; left: 6px; right: 5px; bottom: 0; height: 3px; background: #f9c9b3; }
.two::after { background: linear-gradient(90deg, #f9c9b3 40px, #6d5a50 40px 41px, #c9a393 41px); }
.cur { background: #5c5655; }
.cur::after { left: 0; right: 0; }
.tray { margin-left: auto; display: flex; align-items: center; gap: 11px; font-size: 17px; }
.clock { width: 92px; display: flex; flex-direction: column; justify-content: center; align-items: center; gap: 3px; margin: -2px 1px 0 5px; font-weight: 300; }
.note { width: 50px; display: flex; align-items: center; justify-content: center; }
.peek { width: 6px; margin-left: 10px; border-left: 1px solid #8a847d; }
```
FILE: tube.js
```js
// Shaded tube swept between an outer and an inner rail (x, y pairs).
const outer = [[1281,278],[1296,292],[1327,322],[1353,362],[1377,403],[1393,450],[1402,493],[1404,533],[1400,585],[1388,627],[1367,677],[1333,723],[1283,767],[1233,795],[1167,818],[1083,827],[1033,823],[1007,819],[973,811],[946,800]];
const inner = [[1281,338],[1307,367],[1330,403],[1353,447],[1366,490],[1369,530],[1366,580],[1350,637],[1330,671],[1299,710],[1253,742],[1213,759],[1163,775],[1117,779],[1067,776],[1000,761],[946,740]];
// Grey levels across the tube, inner edge first: [position, upper end, lower end]
const profile = [[0,80,120],[0.07,92,158],[0.16,104,140],[0.24,96,62],[0.34,84,66],[0.48,82,110],[0.62,108,148],[0.76,108,160],[0.88,92,150],[0.95,70,80],[1,100,110]];
const cx = 1090, cy = 520, deg = 5, steps = 48, bands = 32;

// Least-squares polynomial for radius over angle, so each rail is one smooth curve.
function fit(pts) {
  const n = deg + 1, m = Array.from({ length: n }, () => new Array(n + 1).fill(0));
  for (const [x, y] of pts) {
    const a = (Math.atan2(y - cy, x - cx) - .6) / 1.6, r = Math.hypot(x - cx, y - cy);
    for (let i = 0; i < n; i++) {
      for (let j = 0; j < n; j++) m[i][j] += a ** (i + j);
      m[i][n] += r * a ** i;
    }
  }
  for (let i = 0; i < n; i++) for (let k = 0; k < n; k++) if (k !== i) {
    const f = m[k][i] / m[i][i];
    for (let j = i; j <= n; j++) m[k][j] -= f * m[i][j];
  }
  return m.map((row, i) => row[n] / row[i]);
}
function sample(pts) {
  const c = fit(pts), first = pts[0], last = pts[pts.length - 1];
  const a0 = Math.atan2(first[1] - cy, first[0] - cx) - .01, a1 = Math.atan2(last[1] - cy, last[0] - cx) + .01;
  return Array.from({ length: steps + 1 }, (_, i) => {
    const th = a0 + (a1 - a0) * i / steps, a = (th - .6) / 1.6;
    const r = c.reduce((s, v, k) => s + v * a ** k, 0);
    return [cx + r * Math.cos(th), cy + r * Math.sin(th)];
  });
}
const level = (t, k) => {
  for (let i = 1; i < profile.length; i++) {
    const a = profile[i - 1], b = profile[i];
    if (t <= b[0]) return Math.round(a[k] + (b[k] - a[k]) * (t - a[0]) / (b[0] - a[0]));
  }
  return profile[profile.length - 1][k];
};
const ro = sample(outer), ri = sample(inner);
const rail = t => ri.map((p, i) => `${(p[0] + (ro[i][0] - p[0]) * t).toFixed(1)} ${(p[1] + (ro[i][1] - p[1]) * t).toFixed(1)}`);
const edge = rail(1).reverse().join("L");
let out = "";
for (let i = 0; i < bands; i++) {
  const t = i / bands, u = level(t, 1), l = level(t, 2), m = Math.round(u * .75 + l * .25);
  const c = v => `rgb(${v},${v},${v + 4})`;
  out += `<linearGradient id="tb${i}" gradientUnits="userSpaceOnUse" x1="0" y1="290" x2="0" y2="790"><stop offset="0" stop-color="${c(u)}"/><stop offset=".5" stop-color="${c(m)}"/><stop offset="1" stop-color="${c(l)}"/></linearGradient>`;
  out += `<path fill="url(#tb${i})" d="M${rail(t).join("L")}L${edge}Z"/>`;
}
document.getElementById("tube").innerHTML = out;
```
